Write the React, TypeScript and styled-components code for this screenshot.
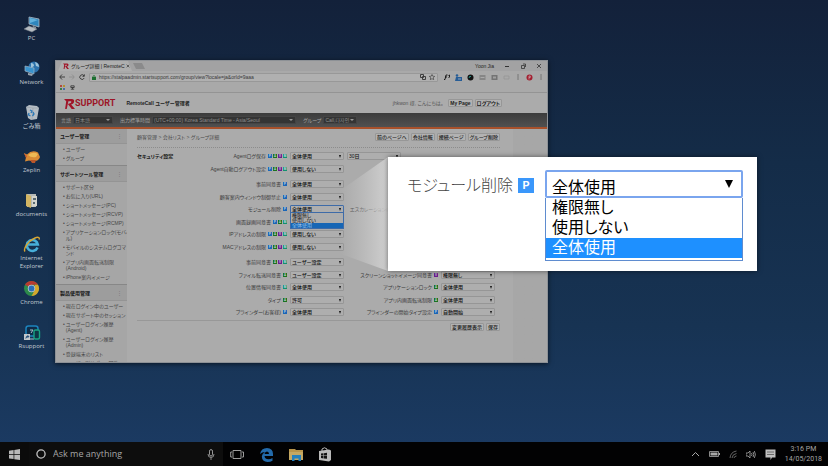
import React from "react";
import styled, { createGlobalStyle, css } from "styled-components";

const GlobalStyle = createGlobalStyle`
  *, *::before, *::after { box-sizing: border-box; }
  html, body { margin: 0; padding: 0; }
  body {
    font-family: "Liberation Sans", "Noto Sans CJK JP", "Noto Sans CJK KR", sans-serif;
    font-feature-settings: "palt";
    overflow: hidden;
  }
  button, input, select { font: inherit; font-feature-settings: inherit; color: inherit; margin: 0; }
  ul, h1, h2, p { margin: 0; padding: 0; list-style: none; font-size: inherit; }
  a { color: inherit; text-decoration: none; }
  svg { display: block; flex: none; }
`;

/* ---------- desktop ---------- */

const Desktop = styled.div`
  min-height: 100vh;
  display: flex;
  flex-direction: column;
  background: linear-gradient(180deg, #13213a 0%, #142c48 35%, #173353 70%, #1b3a62 96%);
`;

const Stage = styled.main`
  position: relative;
  flex: 1;
  display: flex;
`;

const Shortcuts = styled.nav`
  width: 55px;
  padding: 16px 0 0 8px;
  display: grid;
  grid-auto-rows: 44px;
  align-content: start;
`;

const Shortcut = styled.a`
  display: flex;
  flex-direction: column;
  align-items: center;
  gap: 1px;
  color: #c3cad2;
  font: 6px/8px "Open Sans", "Noto Sans CJK JP", sans-serif;
  text-align: center;
  white-space: pre-line;
`;

const WindowArea = styled.div`
  flex: 1;
  display: flex;
  padding: 60px 280px 79px 0;
`;

/* ---------- browser window ---------- */

const Browser = styled.section`
  flex: 1;
  min-width: 0;
  height: 303px;
  display: flex;
  flex-direction: column;
  overflow: hidden;
  background: #ababab;
  color: #3c3c3c;
  font-size: 5px;
  line-height: 6px;
  border: 1px solid #8d9196;
  box-shadow: 0 1px 5px rgba(0, 0, 0, 0.6);
`;

const TabStrip = styled.div`
  height: 10px;
  display: flex;
  align-items: center;
  padding: 0 5px 0 2px;
  background: #a2a2a3;
  color: #222;
`;

const Tab = styled.div`
  height: 10px;
  width: 74px;
  display: flex;
  align-items: center;
  gap: 1px;
  padding: 0 4px 0 5px;
  background: #aeaeae;
  clip-path: polygon(4px 0, 70px 0, 100% 100%, 0 100%);
`;

const TabTitle = styled.span`
  flex: 1;
  padding-left: 1px;
  white-space: nowrap;
`;

const IconButton = styled.button`
  display: grid;
  place-items: center;
  padding: 0;
  border: 0;
  background: none;
`;

const NewTab = styled.button`
  width: 12px;
  height: 6px;
  margin-left: 1px;
  padding: 0;
  border: 0;
  background: #8a8a8b;
  clip-path: polygon(0 0, 9px 0, 100% 100%, 3px 100%);
`;

const WindowControls = styled.div`
  margin-left: auto;
  display: flex;
  align-items: center;
  gap: 10px;
`;

const Toolbar = styled.div`
  height: 12px;
  display: flex;
  align-items: center;
  gap: 4px;
  padding: 0 3px;
  background: #a9a9a9;
  color: #333;
`;

const Address = styled.label`
  flex: 1;
  height: 9px;
  display: flex;
  align-items: center;
  gap: 3px;
  padding: 0 2px;
  margin-right: 2px;
  background: #b0b0b0;
  border: 1px solid #989898;
  border-radius: 1px;
`;

const AddressInput = styled.input`
  flex: 1;
  min-width: 0;
  padding: 0;
  border: 0;
  outline: 0;
  background: none;
  color: #3a3a3a;
`;

const Extensions = styled.div`
  display: flex;
  align-items: center;
  gap: 5px;
`;

const Bookmarks = styled.div`
  height: 10px;
  display: flex;
  align-items: center;
  gap: 5px;
  padding: 0 4px;
  background: #a9a9a9;
  border-bottom: 1px solid #949494;
`;

const SiteHeader = styled.header`
  height: 20px;
  display: flex;
  align-items: center;
  padding: 0 45px 0 8px;
`;

const Brand = styled.a`
  display: flex;
  align-items: center;
  color: #9c1527;
  font: 700 9px/10px Roboto, sans-serif;
`;

const SiteTitle = styled.h1`
  margin-left: 11px;
  color: #222;
  font-weight: 700;
  font-size: 5px;
`;

const Greeting = styled.span`
  margin: 0 5px 0 auto;
  color: #555;
`;

const SmallButton = styled.button<{ $strong?: boolean }>`
  height: 8px;
  padding: 0 1px;
  border: 1px solid #979797;
  border-radius: 1px;
  background: #b2b2b2;
  color: #1c1c1c;
  font-weight: ${(p) => (p.$strong ? 700 : 500)};
  font-size: 5px;
  line-height: 6px;
  white-space: nowrap;
`;

const ButtonRow = styled.div`
  display: flex;
  gap: 2px;
`;

const FilterBar = styled.div`
  height: 16px;
  flex: none;
  display: flex;
  align-items: center;
  padding: 0 5px;
  gap: 2px;
  background: linear-gradient(#3b3b3b, #505050);
  border-bottom: 2px solid #a8512b;
  color: #a3a3a3;
`;

const FilterSelectBox = styled.span<{ $width: number }>`
  position: relative;
  width: ${(p) => p.$width}px;
  margin-right: 5px;
  height: 8px;
  display: flex;
  background: #343434;
  border: 1px solid #444;
  &::after {
    content: "";
    position: absolute;
    right: 2px;
    top: 2px;
    border: 2px solid transparent;
    border-top-color: #9a9a9a;
    border-bottom: 0;
  }
`;

const FilterSelect = styled.select`
  appearance: none;
  flex: 1;
  min-width: 0;
  padding: 0 1px;
  border: 0;
  background: none;
  color: #8d8d8d;
`;

const Page = styled.div`
  flex: 1;
  min-height: 0;
  display: flex;
`;

const Sidebar = styled.aside`
  width: 71px;
  overflow: hidden;
  background: #a6a6a6;
  color: #474747;
`;

const SideHeading = styled.h2`
  height: 17px;
  display: flex;
  align-items: center;
  justify-content: space-between;
  padding: 0 5px 0 4px;
  background: #9d9d9d;
  border-top: 1px solid #878787;
  border-bottom: 1px solid #949494;
  color: #161616;
  font-weight: 700;
  &:first-child { height: 15px; border-top: 0; }
  &::after { content: "⋮"; color: #777; font-weight: 400; }
`;

const SideList = styled.ul`
  padding: 1px 0 2px 7px;
`;

const SideItem = styled.li`
  display: flex;
  gap: 1px;
  padding: 1px 0 2px;
  white-space: pre;
  &::before { content: "•"; }
`;

const Content = styled.div`
  flex: 1;
  min-width: 0;
  padding: 0 47px 0 10px;
  background:
    linear-gradient(90deg, transparent calc(100% - 34px), rgba(155, 155, 155, 0.25) calc(100% - 34px)),
    #ababab;
`;

const Crumbs = styled.div`
  height: 19px;
  padding-bottom: 3px;
  display: flex;
  align-items: center;
  justify-content: space-between;
  border-bottom: 1px dotted #8c8c8c;
  color: #4c4c4c;
`;

const Form = styled.form`
  padding: 2px 5px 2px 0;
  display: grid;
  gap: 3px;
`;

const Group = styled.div`
  display: grid;
  grid-auto-rows: 12px 13px;
`;

const Row = styled.div`
  display: grid;
  grid-template-columns: 150px 54px 1fr 54px;
  column-gap: 3px;
  align-items: center;
`;

const LabelCell = styled.div`
  display: flex;
  align-items: center;
  gap: 1px;
  min-width: 0;
`;

const SectionName = styled.strong`
  color: #151515;
`;

const FieldLabel = styled.label`
  margin: 0 1px 0 auto;
  color: #3c3c3c;
  white-space: nowrap;
`;

const badgeColors = { P: "#1a66b8", A: "#1b7220", V: "#6c1f8e", M: "#139070" };
type BadgeKind = keyof typeof badgeColors;

const Badge = styled.span<{ $kind: BadgeKind; $large?: boolean }>`
  display: grid;
  place-items: center;
  width: 4px;
  height: 4px;
  flex: none;
  background: ${(p) => badgeColors[p.$kind]};
  color: #d0d8e0;
  font: 700 3px/4px Roboto, sans-serif;
  ${(p) =>
    p.$large &&
    css`
      width: 16px;
      height: 15px;
      background: #3a97fb;
      color: #fff;
      font-size: 11px;
      line-height: 15px;
    `}
`;

const SelectBox = styled.span<{ $open?: boolean }>`
  position: relative;
  width: 54px;
  height: 8px;
  display: flex;
  border: 1px solid ${(p) => (p.$open ? "#3e6ba8" : "#969696")};
  border-radius: 1px;
  background: #aeaeae;
  &::after {
    content: "";
    position: absolute;
    right: 2px;
    top: 2px;
    border: 1px solid transparent;
    border-top: 3px solid #111;
    border-bottom: 0;
  }
`;

const Select = styled.select`
  appearance: none;
  flex: 1;
  min-width: 0;
  padding: 0 1px;
  border: 0;
  outline: 0;
  background: none;
  color: #101010;
  font-weight: 500;
`;

const MiniList = styled.ul`
  position: absolute;
  z-index: 1;
  left: -1px;
  right: -1px;
  top: 6px;
  border: 1px solid #3e6ba8;
  background: #adadad;
`;

const MiniOption = styled.li<{ $on?: boolean }>`
  padding-left: 1px;
  height: 5px;
  line-height: 5px;
  background: ${(p) => (p.$on ? "#1766b5" : "none")};
  color: ${(p) => (p.$on ? "#9cc4ea" : "#101010")};
`;

const FormFooter = styled.div`
  display: flex;
  justify-content: flex-end;
  gap: 2px;
  padding-top: 2px;
  border-top: 1px solid #989898;
`;

/* ---------- magnified callout ---------- */

const Beam = styled.svg`
  position: absolute;
  left: 341px;
  top: 157px;
`;

const Callout = styled.section`
  position: absolute;
  left: 388px;
  top: 157px;
  width: 369px;
  height: 114px;
  display: flex;
  align-items: flex-start;
  gap: 5px;
  padding: 13px 14px 0 19px;
  background: #fff;
  color: #444;
  box-shadow: 0 0 5px rgba(0, 0, 0, 0.5);
  font: 16px/28px "Noto Sans CJK JP", sans-serif;
  font-feature-settings: "palt";
`;

const CalloutLabel = styled.label`
  font-weight: 300;
  white-space: nowrap;
`;

const CalloutBadgeSlot = styled.span`
  height: 30px;
  display: flex;
  align-items: center;
`;

const CalloutField = styled.div`
  width: 198px;
  flex: none;
  margin-left: auto;
  color: #000;
`;

const CalloutSelectBox = styled.div`
  position: relative;
  height: 28px;
  display: flex;
  border: 2px solid #7aa5ee;
  border-radius: 2px;
  &::after {
    content: "";
    position: absolute;
    right: 8px;
    top: 8px;
    border: 4px solid transparent;
    border-top: 8px solid #000;
    border-bottom: 0;
  }
`;

const CalloutSelect = styled.select`
  appearance: none;
  flex: 1;
  padding: 0 5px;
  border: 0;
  outline: 0;
  background: none;
`;

const CalloutList = styled.ul`
  border: 1px solid #5f8ccf;
  border-top: 0;
  padding-bottom: 2px;
`;

const CalloutOption = styled.li<{ $on?: boolean }>`
  height: 20px;
  padding-left: 6px;
  line-height: 17px;
  background: ${(p) => (p.$on ? "#1e90ff" : "#fff")};
  color: ${(p) => (p.$on ? "#fff" : "#000")};
`;

/* ---------- taskbar ---------- */

const Taskbar = styled.footer`
  height: 24px;
  display: flex;
  align-items: center;
  background: #020203;
  color: #a6a6a6;
  font: 9px/12px "Open Sans", sans-serif;
`;

const StartButton = styled(IconButton)`
  width: 29px;
  height: 24px;
  background: #0b0b0b;
`;

const Search = styled.label`
  width: 194px;
  height: 24px;
  display: flex;
  align-items: center;
  gap: 7px;
  padding: 0 7px;
  background: #0d0d0d;
`;

const SearchInput = styled.input`
  flex: 1;
  min-width: 0;
  padding: 0;
  border: 0;
  outline: 0;
  background: none;
  &::placeholder { color: #a6a6a6; opacity: 1; }
`;

const Pinned = styled.div`
  display: flex;
  align-items: center;
  gap: 14px;
  padding-left: 7px;
`;

const Tray = styled.div`
  margin-left: auto;
  display: flex;
  align-items: center;
  gap: 9px;
  padding-right: 6px;
`;

const Clock = styled.time`
  font: 7px/10px Roboto, sans-serif;
  text-align: center;
  white-space: pre-line;
`;

/* ---------- drawings ---------- */

const PcIcon = () => (
  <svg width="18" height="17" viewBox="0 0 18 17">
    <path d="M6 1l10 2v8L6 8z" fill="#2f86bd" stroke="#a9b8c4" strokeWidth=".8" />
    <path d="M7 2l8 2-8 3z" fill="#63b1dc" />
    <path d="M10 10l3 1v2l-4-1z" fill="#8b949c" />
    <path d="M1 13l5-3 8 3-5 3z" fill="#b6bcc2" stroke="#747c84" strokeWidth=".5" />
  </svg>
);
const NetworkIcon = () => (
  <svg width="18" height="17" viewBox="0 0 18 17">
    <circle cx="11" cy="7" r="5.5" fill="#2c72ac" />
    <path d="M8 3q3 0 3 3l-3 2zM12 2q4 1 4 5l-3-1z" fill="#9ec4da" />
    <path d="M2 6l9 2v6l-9-3z" fill="#3993cd" stroke="#9fb5c6" strokeWidth=".7" />
    <path d="M5 13l5 1-1 2-4-1z" fill="#98a4ae" />
  </svg>
);
const TrashIcon = () => (
  <svg width="18" height="17" viewBox="0 0 18 17">
    <path d="M3 3l3-2 8 1 2 2-2 11-6 1-3-2z" fill="#b5bdc4" />
    <path d="M3 3l7 1 6 0M10 4l-1 12" stroke="#8e99a2" strokeWidth=".5" fill="none" />
    <path d="M7 6l2 1-1 2M6 9l-.5 2 2 1M10 8l1 2-1.500 2" stroke="#2a78b8" strokeWidth="1.300" fill="none" />
  </svg>
);
const ZeplinIcon = () => (
  <svg width="18" height="17" viewBox="0 0 18 17">
    <path d="M1 5l3 1.500q5-5.500 11-2l2 4.500q-1 4-7 4.500L6 12.500l-4 1 1-4z" fill="#d98b35" />
    <path d="M5 7q5-4 10-1l-2 3q-5 1-8-2z" fill="#edba55" />
    <path d="M7 12h6l-1 3H9z" fill="#b9562a" />
    <path d="M1 5l3 3-1 2z" fill="#c45632" />
  </svg>
);
const FolderIcon = () => (
  <svg width="14" height="17" viewBox="0 0 14 17">
    <path d="M2 2h9v13H2z" fill="#b6b9b5" />
    <path d="M7 4h5v10l-5 1z" fill="#d3d3cc" />
    <path d="M1 2l5 2v12l-5-2z" fill="#d2b563" />
    <path d="M8 6h3v2H8zM8 10h2v2H8z" fill="#596a72" />
  </svg>
);
const IeIcon = () => (
  <svg width="18" height="17" viewBox="0 0 18 17">
    <path d="M14.500 11.500A5.500 5.500 0 1 1 14.800 8.500H5" fill="none" stroke="#47aed8" strokeWidth="2.600" />
    <path d="M2 15.500C0 13 5 5 11 2.500c4-2 6-1.500 5 1" fill="none" stroke="#d8a632" strokeWidth="1.400" />
  </svg>
);
const ChromeIcon = () => (
  <svg width="17" height="17" viewBox="0 0 17 17">
    <circle cx="8.500" cy="8.500" r="7.500" fill="#2c8a4b" />
    <path d="M8.500 8.500L2 4.750A7.500 7.500 0 0 1 15 4.750H8.500z" fill="#b83a30" />
    <path d="M15 4.750A7.500 7.500 0 0 1 8.500 16l3.300-6V4.750z" fill="#d3a72c" />
    <circle cx="8.500" cy="8.500" r="3.700" fill="#c4ccd0" />
    <circle cx="8.500" cy="8.500" r="2.900" fill="#2a6fb8" />
  </svg>
);
const RsupportIcon = () => (
  <svg width="18" height="17" viewBox="0 0 18 17">
    <rect x="3" y="2" width="12" height="10" rx="2.500" fill="#0f2c48" stroke="#1d84bd" strokeWidth="1.500" />
    <path d="M7 6h3l-2 3M5 15h6" stroke="#a9c0cc" strokeWidth="1" fill="none" />
    <rect x="11" y="6" width="5.500" height="9" rx="1.500" fill="#0f3545" stroke="#18a483" strokeWidth="1.400" />
    <path d="M1 10h6v6H1z" fill="#c3c8cc" />
    <path d="M2.500 15q0-3 2-3.200V10.800L6.500 12.700 4.500 14v-1" fill="#26507a" />
  </svg>
);
const RMark = ({ size = 10 }: { size?: number }) => (
  <svg width={size} height={size} viewBox="0 0 10 10">
    <path d="M0 1h7q3 .3 2 3Q8.500 5.500 6.500 6L10 10H7L3.500 5.500 6 4.500q1-.5.500-1.500H4L2.500 10H1l1-7z" fill="#a01428" />
  </svg>
);
const Glyph = ({ d, size = 6, color = "#333", width = 1 }: { d: string; size?: number; color?: string; width?: number }) => (
  <svg width={size} height={size} viewBox="0 0 6 6">
    <path d={d} fill="none" stroke={color} strokeWidth={width} />
  </svg>
);

/* ---------- data ---------- */

const shortcuts: [string, React.FC][] = [
  ["PC", PcIcon],
  ["Network", NetworkIcon],
  ["ごみ箱", TrashIcon],
  ["Zeplin", ZeplinIcon],
  ["documents", FolderIcon],
  ["Internet\nExplorer", IeIcon],
  ["Chrome", ChromeIcon],
  ["Rsupport", RsupportIcon],
];

const sideSections = [
  { title: "ユーザー管理", items: ["ユーザー", "グループ"] },
  {
    title: "サポートツール管理",
    items: [
      "サポート区分",
      "お気に入り(URL)",
      "ショートメッセージ(PC)",
      "ショートメッセージ(RCVP)",
      "ショートメッセージ(RCMP)",
      "アプリケーションロック(モバイ\nル)",
      "モバイルのシステムログコマ\nンド",
      "アプリ内画面転送制限\n(Android)",
      "iPhone案内イメージ",
    ],
  },
  {
    title: "製品使用管理",
    items: [
      "現在ログイン中のユーザー",
      "現在サポート中のセッション",
      "ユーザーログイン履歴\n(Agent)",
      "ユーザーログイン履歴\n(Admin)",
      "登録端末のリスト",
      "ユーザー別サポート回数",
    ],
  },
];

type Field = { label: string; badges: string; value?: string };
type FormRow = { left: Field; right?: Field; extra?: string; section?: string; open?: boolean };

const groups: FormRow[][] = [
  [
    { section: "セキュリティ設定", left: { label: "Agentログ保存", badges: "PAVM", value: "全体使用" }, extra: "30日" },
    { left: { label: "Agent自動ログアウト設定", badges: "PAVM", value: "使用しない" } },
  ],
  [
    { left: { label: "事前同意書", badges: "P", value: "全体使用" } },
    { left: { label: "顧客案内ウィンドウ制御禁止", badges: "P", value: "全体使用" } },
    { left: { label: "モジュール削除", badges: "P", value: "全体使用" }, right: { label: "エスカレーションのウィンドウ表示禁止", badges: "P" }, open: true },
    { left: { label: "画面録画同意書", badges: "PAM", value: "全体使用" }, right: { label: "録画ファイル保存", badges: "P" } },
    { left: { label: "IPアドレスの制限", badges: "PAVM", value: "使用しない" } },
    { left: { label: "MACアドレスの制限", badges: "PAVM", value: "使用しない" } },
  ],
  [
    { left: { label: "事前同意書", badges: "AVM", value: "ユーザー設定" } },
    { left: { label: "ファイル転送同意書", badges: "A", value: "ユーザー設定" }, right: { label: "スクリーンショットイメージ同意書", badges: "V", value: "権限無し" } },
    { left: { label: "位置情報同意書", badges: "M", value: "全体使用" }, right: { label: "アプリケーションロック", badges: "A", value: "全体使用" } },
    { left: { label: "タイプ", badges: "A", value: "許可" }, right: { label: "アプリ内画面転送制限", badges: "A", value: "全体使用" } },
    { left: { label: "ブラインダー(お客様)", badges: "P", value: "全体使用" }, right: { label: "ブラインダーの開始タイプ設定", badges: "P", value: "自動開始" } },
  ],
];

const moduleOptions = ["権限無し", "使用しない", "全体使用"];

function Labelled({ id, field, section }: { id: string; field: Field; section?: string }) {
  return (
    <LabelCell>
      {section && <SectionName>{section}</SectionName>}
      <FieldLabel htmlFor={id}>{field.label}</FieldLabel>
      {field.badges.split("").map((b) => (
        <Badge key={b} $kind={b as BadgeKind}>{b}</Badge>
      ))}
    </LabelCell>
  );
}

function Picker({ id, value, open }: { id: string; value: string; open?: boolean }) {
  return (
    <SelectBox $open={open}>
      <Select id={id} aria-label={value} defaultValue={value}>
        <option>{value}</option>
      </Select>
      {open && (
        <MiniList>
          {moduleOptions.map((o) => (
            <MiniOption key={o} $on={o === value}>{o}</MiniOption>
          ))}
        </MiniList>
      )}
    </SelectBox>
  );
}

function Filter({ label, value, width }: { label: string; value: string; width: number }) {
  return (
    <>
      <label htmlFor={`filter-${label}`}>{label}</label>
      <FilterSelectBox $width={width}>
        <FilterSelect id={`filter-${label}`} defaultValue={value}>
          <option>{value}</option>
        </FilterSelect>
      </FilterSelectBox>
    </>
  );
}

function BrowserWindow() {
  return (
    <Browser>
      <TabStrip>
        <Tab>
          <RMark size={6} />
          <TabTitle>グループ詳細 | RemoteC</TabTitle>
          <IconButton aria-label="Close tab"><Glyph size={4} d="M1 1l4 4M5 1L1 5" /></IconButton>
        </Tab>
        <NewTab aria-label="New tab" />
        <WindowControls>
          <span>Yoon Jia</span>
          <IconButton aria-label="Minimize"><Glyph d="M1 3.500h4" /></IconButton>
          <IconButton aria-label="Restore"><Glyph d="M1.500 2.500h3v3h-3zM3 1h2.500v3" width={0.8} /></IconButton>
          <IconButton aria-label="Close"><Glyph d="M1 1l4 4M5 1L1 5" width={0.8} /></IconButton>
        </WindowControls>
      </TabStrip>
      <Toolbar>
        <IconButton aria-label="Back"><Glyph d="M6 3H1M3 .500L.700 3 3 5.500" width={0.9} /></IconButton>
        <IconButton aria-label="Forward"><Glyph d="M0 3h5M3 .500L5.300 3 3 5.500" color="#8c8c8c" width={0.8} /></IconButton>
        <IconButton aria-label="Reload"><Glyph d="M5 1.800A2.300 2.300 0 1 0 5.200 4M5.300 .300v2H3.500" width={0.9} /></IconButton>
        <Address>
          <svg width="4" height="5" viewBox="0 0 4 5"><path d="M0 2h4v3H0z" fill="#1c6f30" /><path d="M1 2V1q1-1 2 0v1" fill="none" stroke="#1c6f30" strokeWidth=".7" /></svg>
          <AddressInput aria-label="Address" defaultValue="https://stalpaadmin.startsupport.com/group/view?locale=ja&amp;orId=9aaa" />
          <Glyph d="M.500 .500h3v3h-3zM2.500 2.500h3v3h-3z" width={0.9} />
          <Glyph d="M3 .500l.8 1.700 1.900.2-1.400 1.300.4 1.900L3 4.700l-1.700.9.400-1.900L.300 2.400l1.900-.2z" width={0.6} />
        </Address>
        <Extensions>
          <Glyph d="M0 5.500h1L2 1h1.500M1 3h2M4.500 1.500l1-.5v2l-1 1" width={0.9} color="#111" />
          <svg width="7" height="7" viewBox="0 0 7 7"><path d="M1 3h6v4H0z" fill="#275d96" /><circle cx="2" cy="1.500" r="1.300" fill="#275d96" /><path d="M3 5h3" stroke="#a8b8c8" strokeWidth=".8" /></svg>
          <svg width="7" height="7" viewBox="0 0 7 7"><circle cx="3.500" cy="3.500" r="3" fill="#111" /><path d="M2 4l1-2 1 1" stroke="#239184" fill="none" /></svg>
          <svg width="7" height="7" viewBox="0 0 7 7"><rect x=".5" y="1" width="6" height="5" fill="#868686" /><path d="M1.500 3.500h4" stroke="#aaa" /></svg>
          <svg width="7" height="7" viewBox="0 0 7 7"><rect x=".5" y="1" width="6" height="5" fill="#747474" /><rect x="2" y="2.500" width="3" height="2" fill="#a0a0a0" /></svg>
          <svg width="7" height="7" viewBox="0 0 7 7"><path d="M1 2h5v3H1z" fill="none" stroke="#929292" strokeWidth=".7" /></svg>
          <Glyph d="M3 .500v1M3 2.500v1M3 4.500v1" color="#444" />
          <svg width="7" height="7" viewBox="0 0 7 7"><circle cx="3.500" cy="3.500" r="3" fill="#a31f30" /><path d="M3 5.500V2h1.300v1.500H3" stroke="#c9aeb2" strokeWidth=".7" fill="none" /></svg>
          <Glyph d="M3 .500v1M3 2.500v1M3 4.500v1" color="#444" />
        </Extensions>
      </Toolbar>
      <Bookmarks>
        <svg width="5" height="5" viewBox="0 0 5 5"><path d="M0 0h2v2H0z" fill="#b0483c" /><path d="M3 0h2v2H3z" fill="#b38f31" /><path d="M0 3h2v2H0z" fill="#3b7c4a" /><path d="M3 3h2v2H3z" fill="#4a6ea4" /></svg>
        <Glyph size={5} d="M1 1h4v2H1zM3 3v2M1 5h4" />
      </Bookmarks>
      <SiteHeader>
        <Brand href="#home"><RMark size={11} />SUPPORT</Brand>
        <SiteTitle>RemoteCall ユーザー管理者</SiteTitle>
        <Greeting>jhkwon 様, こんにちは。</Greeting>
        <ButtonRow>
          <SmallButton $strong>My Page</SmallButton>
          <SmallButton $strong>ログアウト</SmallButton>
        </ButtonRow>
      </SiteHeader>
      <FilterBar>
        <Filter label="言語" value="日本語" width={40} />
        <Filter label="出力標準時間" value="(UTC+09:00) Korea Standard Time - Asia/Seoul" width={144} />
        <Filter label="グループ" value="Call,다자인" width={34} />
      </FilterBar>
      <Page>
        <Sidebar>
          {sideSections.map((s) => (
            <React.Fragment key={s.title}>
              <SideHeading>{s.title}</SideHeading>
              <SideList>
                {s.items.map((i) => (
                  <SideItem key={i}><a href="#menu">{i}</a></SideItem>
                ))}
              </SideList>
            </React.Fragment>
          ))}
        </Sidebar>
        <Content>
          <Crumbs>
            <span>顧客管理 &gt; 会社リスト &gt; グループ詳細</span>
            <ButtonRow>
              {["前のページへ", "会社情報", "接続ページ", "グループ削除"].map((b) => (
                <SmallButton key={b}>{b}</SmallButton>
              ))}
            </ButtonRow>
          </Crumbs>
          <Form>
            {groups.map((rows, g) => (
              <Group key={g}>
                {rows.map((r, i) => (
                  <Row key={i}>
                    <Labelled id={`l${g}${i}`} field={r.left} section={r.section} />
                    <Picker id={`l${g}${i}`} value={r.left.value ?? ""} open={r.open} />
                    {r.extra && <Picker id={`e${g}${i}`} value={r.extra} />}
                    {r.right && <Labelled id={`r${g}${i}`} field={r.right} />}
                    {r.right?.value && <Picker id={`r${g}${i}`} value={r.right.value} />}
                  </Row>
                ))}
              </Group>
            ))}
          </Form>
          <FormFooter>
            <SmallButton>変更履歴表示</SmallButton>
            <SmallButton>保存</SmallButton>
          </FormFooter>
        </Content>
      </Page>
    </Browser>
  );
}

export default function App() {
  return (
    <Desktop>
      <GlobalStyle />
      <Stage>
        <Shortcuts>
          {shortcuts.map(([name, Icon]) => (
            <Shortcut key={name} href="#open"><Icon />{name}</Shortcut>
          ))}
        </Shortcuts>
        <WindowArea><BrowserWindow /></WindowArea>
        <Beam width="47" height="114" viewBox="0 0 47 114">
          <defs>
            <linearGradient id="beam">
              <stop offset="0" stopColor="#c8c8c8" stopOpacity="0" />
              <stop offset="1" stopColor="#d4d4d4" stopOpacity=".9" />
            </linearGradient>
          </defs>
          <path d="M0 33L47 0v114L0 97z" fill="url(#beam)" />
        </Beam>
        <Callout>
          <CalloutLabel htmlFor="module">モジュール削除</CalloutLabel>
          <CalloutBadgeSlot><Badge $kind="P" $large>P</Badge></CalloutBadgeSlot>
          <CalloutField>
            <CalloutSelectBox>
              <CalloutSelect id="module" defaultValue="全体使用">
                {moduleOptions.map((o) => <option key={o}>{o}</option>)}
              </CalloutSelect>
            </CalloutSelectBox>
            <CalloutList>
              {moduleOptions.map((o) => (
                <CalloutOption key={o} $on={o === "全体使用"}>{o}</CalloutOption>
              ))}
            </CalloutList>
          </CalloutField>
        </Callout>
      </Stage>
      <Taskbar>
        <StartButton aria-label="Start">
          <svg width="11" height="11" viewBox="0 0 11 11"><path d="M0 1.700l4.600-.7v4.200H0zM5.300.900L11 0v5.200H5.300zM0 5.900h4.600v4.200L0 9.400zM5.300 5.900H11V11l-5.700-.8z" fill="#b8b8b8" /></svg>
        </StartButton>
        <Search>
          <svg width="10" height="10" viewBox="0 0 10 10"><circle cx="5" cy="5" r="4.100" fill="none" stroke="#c2c2c2" strokeWidth="1.300" /></svg>
          <SearchInput placeholder="Ask me anything" aria-label="Search" />
          <svg width="10" height="11" viewBox="0 0 10 11"><rect x="3.500" y=".6" width="3" height="6.400" rx="1.500" fill="none" stroke="#a9a9a9" strokeWidth=".9" /><path d="M2 5q0 3.500 3 3.500T8 5M5 8.500V11" fill="none" stroke="#a9a9a9" strokeWidth=".8" /></svg>
        </Search>
        <Pinned>
          <IconButton aria-label="Task view">
            <svg width="15" height="11" viewBox="0 0 15 11"><path d="M3 1.500h8v8H3zM2 3H.700v5H2M12 3h1.500v5H12" fill="none" stroke="#9c9c9c" /></svg>
          </IconButton>
          <IconButton aria-label="Edge">
            <svg width="15" height="15" viewBox="0 0 15 15"><path d="M1 7Q2 1 8 1q6 .5 6 6v2H5.500q.5 3.200 4 3.200 2 0 4-1.200v2.800q-2 1.200-5 1.200Q3 14.500 2.800 9.500 3 6.500 6 5 3 5 1 7zm4.500 0H10q0-2.500-2-2.500T5.500 7z" fill="#236aaa" /></svg>
          </IconButton>
          <IconButton aria-label="File Explorer">
            <svg width="16" height="13" viewBox="0 0 16 13"><path d="M1 1h6l1 1h7v10H1z" fill="#b8954b" /><path d="M1 4h14v8H1z" fill="#c4a863" /><path d="M4 7h9v6h-2.500v-2.500h-4V13H4z" fill="#2380be" /></svg>
          </IconButton>
          <IconButton aria-label="Store">
            <svg width="14" height="15" viewBox="0 0 14 15"><path d="M1 4l10-1.500 2 1V13l-2 1.500L1 13z" fill="#b9b9b9" /><path d="M4 4V2q2.500-2.500 5 0v1" fill="none" stroke="#b9b9b9" /><path d="M3 6.500l2.500-.3v2.300H3zM6 6.200L9 5.800v2.700H6zM3 9h2.500v2.400L3 11zM6 9h3v2.800l-3-.3z" fill="#111" /></svg>
          </IconButton>
        </Pinned>
        <Tray>
          <IconButton aria-label="Show hidden icons"><svg width="9" height="6" viewBox="0 0 9 6"><path d="M1 5l3.500-3.500L8 5" fill="none" stroke="#a9a9a9" /></svg></IconButton>
          <svg width="11" height="6" viewBox="0 0 11 6"><path d="M.500 .500h9v5h-9z" fill="none" stroke="#8a8a8a" /><path d="M1.500 1.500h7v3h-7zM10 2h1v2h-1z" fill="#a8a8a8" /></svg>
          <svg width="8" height="8" viewBox="0 0 8 8"><path d="M1 8Q1.500 2 7.500 1M3 8q.5-4 4.500-4.500M5 8q.3-1.800 2.500-2" fill="none" stroke="#7c7c7c" strokeWidth=".8" /></svg>
          <svg width="10" height="9" viewBox="0 0 10 9"><path d="M0 3h2l2-2v7L2 6H0z" fill="none" stroke="#a9a9a9" strokeWidth=".8" /><path d="M5.500 3q1 1.500 0 3M7 2q1.700 2.500 0 5M8.300 1q2.300 3.500 0 7" fill="none" stroke="#a9a9a9" strokeWidth=".8" /></svg>
          <svg width="11" height="11" viewBox="0 0 11 11"><path d="M.500 .500h10v8H7L5.500 11V8.500h-5z" fill="#c0c0c0" /><path d="M2 3h7M2 5.500h7" stroke="#555" strokeWidth=".8" /></svg>
          <Clock>{"3:16 PM\n14/05/2018"}</Clock>
        </Tray>
      </Taskbar>
    </Desktop>
  );
}
